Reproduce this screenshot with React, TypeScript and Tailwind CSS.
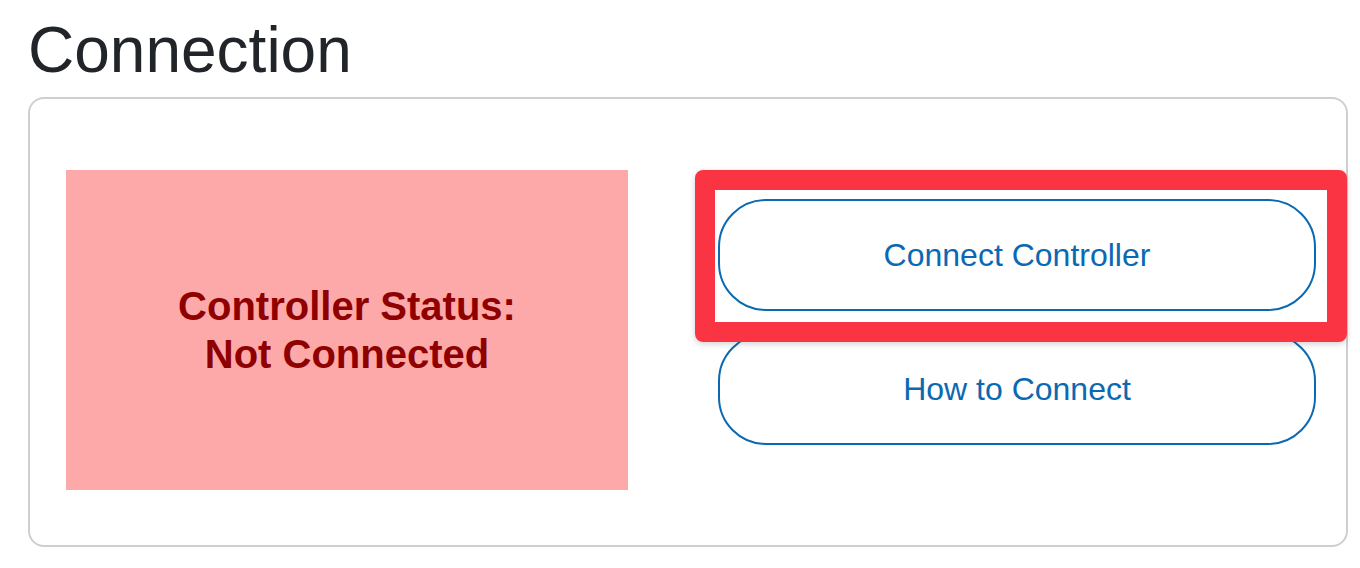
export default function App() {
  return (
    <div
      className="min-h-screen bg-white pl-[28px] pt-[12px]"
      style={{ fontFamily: '"Liberation Sans", Arial, sans-serif' }}
    >
      <h2 className="text-[64px] leading-[1.2] font-normal text-[#212529]">
        Connection
      </h2>

      <div className="mt-[8px] flex w-[1320px] rounded-[16px] border-2 border-[#ccd0d4] pt-[71px] pb-[55px] pl-[36px]">
        <div className="flex h-[320px] w-[562px] shrink-0 items-center justify-center bg-[#fda9a9] text-center text-[40px] leading-[48px] font-bold text-[#8f0000]">
          <p>
            Controller Status:
            <br />
            Not Connected
          </p>
        </div>

        <div className="relative ml-[90px] flex w-[598px] flex-col gap-[22px] pt-[29px]">
          <button
            type="button"
            className="h-[112px] w-full rounded-[48px] border-2 border-[#0a69b2] bg-white text-[32px] text-[#0a69b2]"
          >
            Connect Controller
          </button>
          <button
            type="button"
            className="h-[112px] w-full rounded-[48px] border-2 border-[#0a69b2] bg-white text-[32px] text-[#0a69b2]"
          >
            How to Connect
          </button>

          {/* highlight frame over the first button */}
          <div className="pointer-events-none absolute top-[0px] left-[-23px] h-[172px] w-[652px] rounded-[8px] border-[20px] border-[#fa3443] shadow-[0_2px_6px_rgba(0,0,0,0.18)]" />
        </div>
      </div>
    </div>
  );
}
